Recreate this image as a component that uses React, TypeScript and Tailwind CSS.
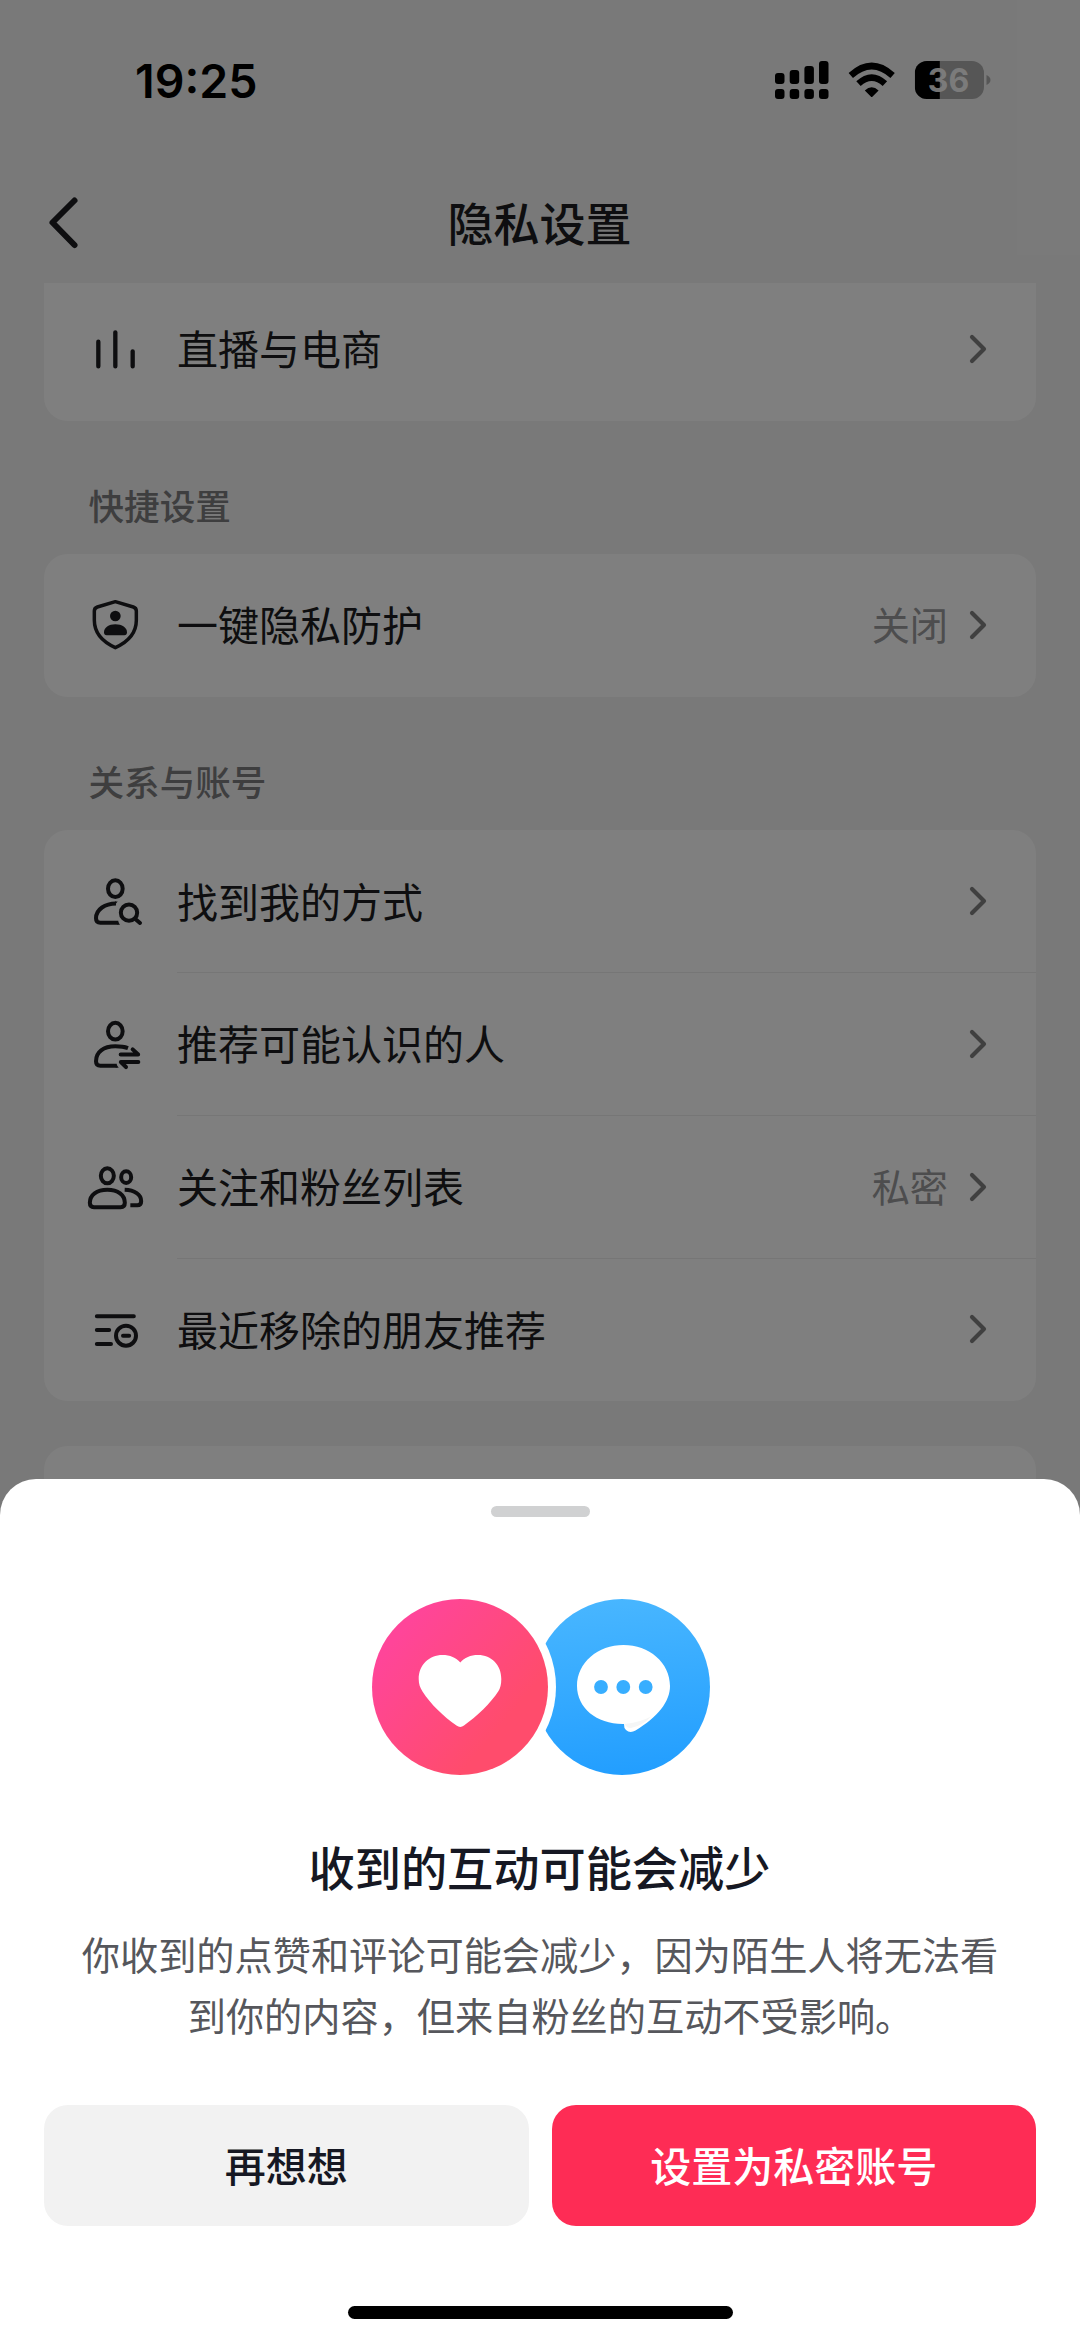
import type { ReactNode } from 'react';

const INK = '#1c1d21';

function RowIcon({ top, children }: { top: number; children: ReactNode }) {
  return (
    <svg
      className="h-[72px] w-[72px] shrink-0"
      viewBox={`-3 ${top} 216 216`}
      fill="none"
      stroke={INK}
      strokeWidth="12"
      strokeLinejoin="round"
    >
      {children}
    </svg>
  );
}

const BarsIcon = () => (
  <RowIcon top={8}>
    <path d="M55 94V168M106 66V168M158 123V168" strokeWidth="13" strokeLinecap="round" />
  </RowIcon>
);

const ShieldIcon = () => (
  <RowIcon top={838}>
    <path
      d="M106 876L160 892Q169 895 169 904V932C169 968 146 996 106 1014C66 996 43 968 43 932V904Q43 895 52 892Z"
      strokeWidth="10.500"
    />
    <circle cx="106" cy="919" r="16" fill={INK} stroke="none" />
    <path
      d="M72 968C72 954 86 944 106 944C126 944 141 954 141 968Q141 977 133 977H80Q72 977 72 968Z"
      fill={INK}
      stroke="none"
    />
  </RowIcon>
);

const FindIcon = () => (
  <RowIcon top={1}>
    <ellipse cx="106" cy="69" rx="22" ry="25" />
    <path d="M108 113.500C76 114 48 130 48 158Q48 171.500 61 171.500H115" />
    <path d="M113 166L120 177.500H112ZM104 119L113 107.500H105Z" fill={INK} stroke="none" />
    <circle cx="147" cy="141" r="24.500" />
    <path d="M165 159L180 172" strokeLinecap="round" />
  </RowIcon>
);

const RecommendIcon = () => (
  <RowIcon top={429.4}>
    <ellipse cx="106" cy="499" rx="22" ry="25" />
    <path d="M144 550C132 545.500 120 544.500 106 544.500C70 544.500 48 562 48 589Q48 602.500 61 602.500H110" />
    <path d="M108 597L116 608.500H107Z" fill={INK} stroke="none" />
    <path d="M122 569H174.500L158 553.500M175 591.500H122.500L138 606.500" strokeWidth="12" strokeLinecap="round" />
  </RowIcon>
);

const GroupIcon = () => (
  <RowIcon top={857.6}>
    <ellipse cx="82" cy="932" rx="19.500" ry="22.500" />
    <ellipse cx="138.500" cy="936" rx="15" ry="17.500" />
    <path d="M82 974C50 974 29.500 990 29.500 1013Q29.500 1026 42 1026H122Q134.500 1026 134.500 1013C134.500 990 114 974 82 974Z" />
    <path d="M134 974C164 975 183.500 988 183.500 1008Q183.500 1020 172 1020H151" />
  </RowIcon>
);

const RemovedIcon = () => (
  <RowIcon top={1286}>
    <path d="M50.500 1353H161.500M50.500 1394H87.500M50.500 1436H93M129 1411H147.500" strokeLinecap="round" />
    <circle cx="138" cy="1411" r="30" />
  </RowIcon>
);

const Chevron = () => (
  <svg
    className="h-[32px] w-[22px] shrink-0"
    viewBox="0 0 22 32"
    fill="none"
    stroke="#808080"
    strokeWidth="4.200"
    strokeLinecap="round"
    strokeLinejoin="round"
  >
    <path d="M5 4L17 16L5 28" />
  </svg>
);

type RowProps = { icon: ReactNode; label: string; value?: string; divider?: boolean };

function Row({ icon, label, value, divider }: RowProps) {
  return (
    <div className="flex h-[142.750px] shrink-0 items-center pl-[35px]">
      {icon}
      <div
        className={`ml-[26px] flex h-full flex-1 items-center border-b pr-[47px] ${
          divider ? 'border-[#ececec]' : 'border-transparent'
        }`}
      >
        <span className="flex-1 pb-[2px] text-[41px] leading-none text-[#1c1d21]">{label}</span>
        {value && <span className="mr-[19px] pb-[1px] text-[38.200px] leading-none text-[#9a9a9c]">{value}</span>}
        <Chevron />
      </div>
    </div>
  );
}

const SectionLabel = ({ children }: { children: ReactNode }) => (
  <div className="-ml-[44px] flex h-[133.500px] items-center pl-[88.500px] pt-[35px] text-[35.600px] font-medium leading-none text-[#7c7c7e]">
    {children}
  </div>
);

function StatusBar() {
  return (
    <div className="flex h-[160px] shrink-0 items-center justify-between pl-[135px] pr-[89px]">
      <span className="pt-[2px] font-[Inter] text-[46.500px] font-semibold leading-none text-black">19:25</span>
      <svg className="h-[40px] w-[216px]" viewBox="0 0 216 40">
        <rect x="0" y="13" width="9.500" height="11" rx="3" />
        <rect x="14.700" y="10" width="9.500" height="14" rx="3" />
        <rect x="29.400" y="6" width="9.500" height="18" rx="3" />
        <rect x="44" y="1" width="9.500" height="23" rx="3" />
        <rect x="0" y="29" width="9.500" height="10" rx="3" />
        <rect x="14.700" y="29" width="9.500" height="10" rx="3" />
        <rect x="29.400" y="29" width="9.500" height="10" rx="3" />
        <rect x="44" y="29" width="9.500" height="10" rx="3" />
        <g fill="none" stroke="#000" strokeWidth="6.500">
          <path d="M75.800 15.500Q96.700 -3.500 117.600 15.500" />
          <path d="M83.500 23.700Q96.700 11.500 109.900 23.700" />
        </g>
        <path d="M89.800 30.500Q96.700 24 103.600 30.500L97.600 36.500Q96.700 37.500 95.800 36.500Z" />
        <defs>
          <clipPath id="cell">
            <rect x="139.800" y="1" width="69.200" height="38" rx="12" />
          </clipPath>
        </defs>
        <g clipPath="url(#cell)">
          <rect x="139.800" y="1" width="69.200" height="38" fill="#acacac" />
          <rect x="139.800" y="1" width="25" height="38" />
        </g>
        <path d="M211.500 15Q215.500 17 215.500 20T211.500 25Z" fill="#acacac" />
        <text
          x="173.500"
          y="32"
          textAnchor="middle"
          fontFamily="Inter"
          fontWeight="700"
          fontSize="32"
          fill="#fff"
          fillOpacity="0.92"
        >
          36
        </text>
      </svg>
    </div>
  );
}

function SettingsPage() {
  return (
    <div className="flex h-full flex-col bg-[#f3f3f3]">
      <StatusBar />
      <header className="flex h-[123px] shrink-0 items-center px-[44px]">
        <svg
          className="h-[56px] w-[40px]"
          viewBox="0 0 40 56"
          fill="none"
          stroke={INK}
          strokeWidth="6"
          strokeLinecap="round"
          strokeLinejoin="round"
        >
          <path d="M30.500 6.500L8.500 28.500L30.500 51" />
        </svg>
        <h1 className="flex-1 pb-[2px] pr-[41px] text-center text-[46px] font-medium leading-none text-[#1c1d21]">
          隐私设置
        </h1>
      </header>
      <main className="px-[44px]">
        <div className="flex h-[137.500px] flex-col justify-end overflow-hidden rounded-b-[24px] bg-white">
          <Row icon={<BarsIcon />} label="直播与电商" />
        </div>
        <SectionLabel>快捷设置</SectionLabel>
        <div className="rounded-[24px] bg-white">
          <Row icon={<ShieldIcon />} label="一键隐私防护" value="关闭" />
        </div>
        <SectionLabel>关系与账号</SectionLabel>
        <div className="rounded-[24px] bg-white">
          <Row icon={<FindIcon />} label="找到我的方式" divider />
          <Row icon={<RecommendIcon />} label="推荐可能认识的人" divider />
          <Row icon={<GroupIcon />} label="关注和粉丝列表" value="私密" divider />
          <Row icon={<RemovedIcon />} label="最近移除的朋友推荐" />
        </div>
        <div className="mt-[44.500px] h-[142px] rounded-[24px] bg-white" />
      </main>
    </div>
  );
}

function ReactionArt() {
  return (
    <svg className="h-[200px] w-[360px]" viewBox="0 0 360 200">
      <defs>
        <linearGradient id="pink" x1="0.150" y1="0.200" x2="0.750" y2="0.700">
          <stop offset="0" stopColor="#ff4599" />
          <stop offset="1" stopColor="#ff4c6c" />
        </linearGradient>
        <linearGradient id="blue" x1="0.450" y1="0" x2="0.550" y2="1">
          <stop offset="0" stopColor="#48b6ff" />
          <stop offset="1" stopColor="#229eff" />
        </linearGradient>
      </defs>
      <circle cx="262" cy="100" r="88" fill="url(#blue)" />
      <circle cx="100" cy="100" r="96" fill="#fff" />
      <circle cx="100" cy="100" r="88" fill="url(#pink)" />
      <path
        d="M100.300 75.500C96 70.500 90 68 82.500 68C69 68 58.700 78 58.700 92C58.700 97 60 100.500 62.500 104.500C70.500 117 83.500 129.500 96.500 138.600Q100.200 141.400 104 138.600C117 129 130.500 116.500 138.500 104Q141.300 99.500 141.300 92C141.300 78 131.500 68 118 68C110.500 68 104.500 70.500 100.300 75.500Z"
        fill="#fff"
      />
      <path
        d="M263.500 58C289 58 310 75.500 310 99C310 114.500 298 130 275.500 143.500Q270 146.500 266 143Q263.800 141 264 137C237 137.500 217 121 217 99C217 75.500 238 58 263.500 58Z"
        fill="#fff"
      />
      <path d="M264.500 137Q280 135.500 291 129.500Q283 138.500 271 141Q267 141.500 264.500 137Z" fill="#f5f6f6" />
      <g fill="#38aeff">
        <circle cx="241" cy="100" r="6.900" />
        <circle cx="263.300" cy="100" r="6.900" />
        <circle cx="285.700" cy="100" r="6.900" />
      </g>
    </svg>
  );
}

function ConfirmSheet() {
  return (
    <section className="absolute inset-x-0 bottom-0 flex h-[862.500px] flex-col items-center rounded-t-[36px] bg-white">
      <div className="mt-[27px] h-[11px] w-[99px] shrink-0 rounded-full bg-[#d0d1d2]" />
      <div className="mt-[70.500px] h-[200px]">
        <ReactionArt />
      </div>
      <h2 className="mt-[56px] pr-[1px] text-[46.200px] font-medium leading-[46px] text-[#161823]">
        收到的互动可能会减少
      </h2>
      <p className="mt-[35px] text-center text-[38.200px] leading-[60.500px] text-[#56575c]">
        你收到的点赞和评论可能会减少，因为陌生人将无法看
        <br />
        <span className="pl-[21px]">到你的内容，但来自粉丝的互动不受影响。</span>
      </p>
      <div className="mt-[59.500px] flex w-full gap-[23px] px-[44px] text-[41px] font-medium leading-none">
        <button className="h-[121px] flex-1 rounded-[24px] bg-[#f2f2f2] pb-[2px] text-[#161823]">再想想</button>
        <button className="h-[121px] flex-1 rounded-[24px] bg-[#fe2c55] pb-[2px] text-white">设置为私密账号</button>
      </div>
      <div className="mb-[22px] mt-auto h-[13px] w-[385px] rounded-full bg-black" />
    </section>
  );
}

export default function App() {
  return (
    <div className="relative h-[2341px] w-[1080px] overflow-hidden font-['Noto_Sans_CJK_SC',sans-serif]">
      <SettingsPage />
      <div className="absolute inset-0 bg-black/50" />
      <ConfirmSheet />
    </div>
  );
}
